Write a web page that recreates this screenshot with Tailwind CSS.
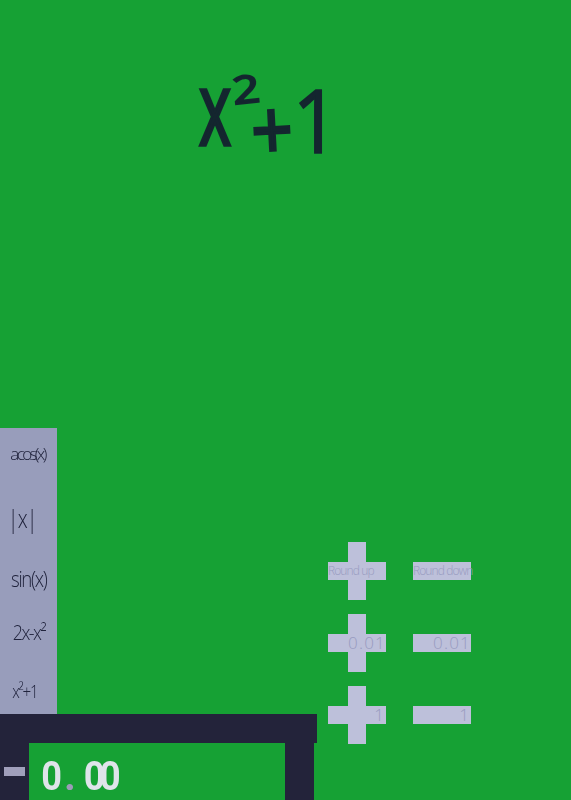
<!DOCTYPE html>
<html>
<head>
<meta charset="utf-8">
<script src="https://cdn.jsdelivr.net/npm/@tailwindcss/browser@4"></script>
</head>
<body class="m-0 overflow-hidden">
<main class="flex h-[800px] w-[571px] flex-col overflow-hidden bg-[#16a134] font-['Open_Sans',sans-serif]">
  <header class="flex h-[428px] shrink-0 items-start pl-[190px] pt-[60px] text-[#14262f] blur-[0.5px]">
    <h1 class="flex items-start font-normal [-webkit-text-stroke:2.5px_#14262f]">
      <span class="mt-[-2px] block w-[50px] origin-center scale-x-[0.85] scale-y-[1.42] text-center text-[72px] leading-[94px] font-normal">x</span>
      <span class="ml-[-5px] mt-[4px] block -rotate-6 scale-x-[1.25] text-[38px] leading-[48px] font-medium [-webkit-text-stroke:2px_#14262f]">2</span>
      <span class="ml-[-4px] mt-[28px] block -rotate-3 scale-x-[1.1] scale-y-[1.25] text-[66px] leading-[78px] [-webkit-text-stroke:2.5px_#14262f]">+</span>
      <span class="ml-[2px] mt-[10px] block w-[36px] scale-y-[1.08] text-center text-[82px] leading-[96px] font-medium [-webkit-text-stroke:1.5px_#14262f]">1</span>
    </h1>
  </header>
  <section class="flex min-h-0 flex-1">
    <div class="flex w-[317px] shrink-0 flex-col">
      <ul class="flex h-[286px] w-[57px] shrink-0 flex-col items-center bg-[#989dbb] pt-[10px] font-['Open_Sans',sans-serif] font-light text-[#20233c] blur-[0.3px]">
        <li class="flex h-[32px] translate-x-[-1px] items-center whitespace-nowrap text-[17px] tracking-[-2.6px]">acos(x)</li>
        <li class="mt-[33px] flex h-[32px] translate-x-[-6px] scale-x-[0.8] items-center text-[25px] tracking-[-1px]">|x|</li>
        <li class="mt-[27px] flex h-[32px] scale-x-[0.85] items-center text-[22px] tracking-[-1.6px]">sin(x)</li>
        <li class="mt-[23px] flex h-[32px] scale-x-[0.85] items-center whitespace-nowrap text-[21px] tracking-[-1.8px]">2x-x²</li>
        <li class="mt-[26px] flex h-[32px] translate-x-[-4px] scale-x-[0.8] items-center whitespace-nowrap text-[19px] tracking-[-1.5px]">x²+1</li>
      </ul>
      <div class="h-[29px] shrink-0 bg-[#23233a]"></div>
      <div class="flex w-[314px] flex-1">
        <div class="flex w-[29px] shrink-0 items-start bg-[#23233a] pl-[4px] pt-[24px]">
          <div class="h-[9px] w-[21px] bg-[#a09fbb]"></div>
        </div>
        <div class="flex w-[256px] shrink-0 items-start pl-[11px] pt-[9px] font-['Roboto',sans-serif] text-[41px] leading-[48px] font-bold text-[#dfe4ea] blur-[0.4px]">
          <span class="w-[20px] scale-x-[0.88] text-center">0</span><span class="ml-[4px] text-[#9c9cb8]">.</span><span class="ml-[6px] scale-x-[0.9] tracking-[-6px]">00</span>
        </div>
        <div class="w-[29px] shrink-0 bg-[#23233a]"></div>
      </div>
    </div>
    <div class="grid auto-rows-[58px] grid-cols-[58px_58px] content-start gap-x-[27px] gap-y-[14px] pl-[11px] pt-[114px] font-['Open_Sans',sans-serif] font-light text-[#989bc0]">
      <button class="grid place-items-center">
        <span class="h-[58px] w-[18px] bg-[#bdc0da] [grid-area:1/1]"></span>
        <span class="flex h-[18px] w-[58px] items-center whitespace-nowrap bg-[#bdc0da] text-[12px] tracking-[-0.9px] [grid-area:1/1]">Round up</span>
      </button>
      <button class="flex h-[58px] items-center">
        <span class="flex h-[18px] w-[58px] items-center whitespace-nowrap bg-[#bdc0da] text-[12px] tracking-[-0.9px]">Round down</span>
      </button>
      <button class="grid place-items-center">
        <span class="h-[58px] w-[18px] bg-[#bdc0da] [grid-area:1/1]"></span>
        <span class="flex h-[18px] w-[58px] items-center justify-end bg-[#bdc0da] text-[17px] tracking-[1.2px] [grid-area:1/1]">0.01</span>
      </button>
      <button class="flex h-[58px] items-center">
        <span class="flex h-[18px] w-[58px] items-center justify-end bg-[#bdc0da] text-[17px] tracking-[1.2px]">0.01</span>
      </button>
      <button class="grid place-items-center">
        <span class="h-[58px] w-[18px] bg-[#bdc0da] [grid-area:1/1]"></span>
        <span class="flex h-[18px] w-[58px] items-center justify-end bg-[#bdc0da] pr-[2px] text-[17px] [grid-area:1/1]">1</span>
      </button>
      <button class="flex h-[58px] items-center">
        <span class="flex h-[18px] w-[58px] items-center justify-end bg-[#bdc0da] pr-[2px] text-[17px]">1</span>
      </button>
    </div>
  </section>
</main>
</body>
</html>
